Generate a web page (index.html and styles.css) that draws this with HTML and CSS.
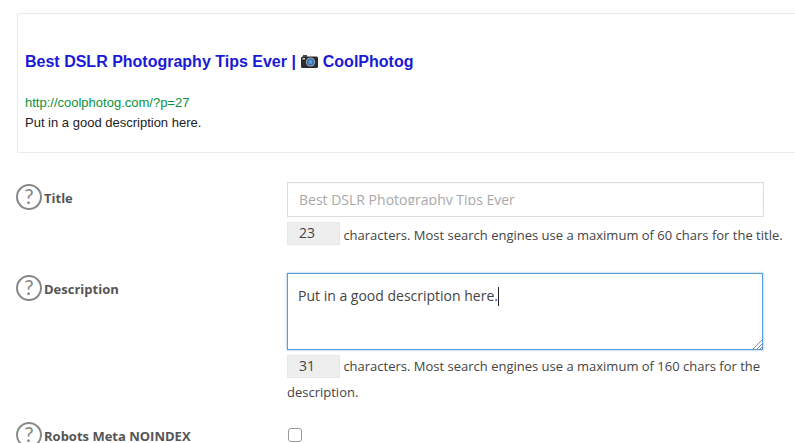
FILE: index.html
```html
<!DOCTYPE html>
<html lang="en">
<head>
<meta charset="utf-8">
<title>Snippet editor</title>
<link rel="stylesheet" href="styles.css">
</head>
<body>
<main class="page">
  <section class="preview">
    <h3 class="serp-title">Best DSLR Photography Tips Ever | <svg class="camera" viewBox="0 0 17 13" width="17" height="13" aria-hidden="true"><rect x="0" y="1.5" width="17" height="11.5" rx="1.5" fill="#2b2d30"/><rect x="2" y="0" width="4" height="2" fill="#44474b"/><rect x="1.5" y="3" width="2.5" height="1.5" fill="#c9ccd0"/><circle cx="9.5" cy="7" r="4.6" fill="#a4a8ae"/><circle cx="9.5" cy="7" r="3.5" fill="#2f6fb5"/><circle cx="9.5" cy="7" r="2" fill="#5b9fe0"/></svg> CoolPhotog</h3>
    <div class="serp-url">http://coolphotog.com/?p=27</div>
    <div class="serp-desc">Put in a good description here.</div>
  </section>
  <div class="row row-title">
    <div class="label"><span class="help">?</span><span class="label-text">Title</span></div>
    <div class="field">
      <div class="input placeholder"><span>Best DSLR Photography Tips Ever</span></div>
      <div class="hint"><span class="count">23</span> characters. Most search engines use a maximum of 60 chars for the title.</div>
    </div>
  </div>
  <div class="row row-desc">
    <div class="label"><span class="help">?</span><span class="label-text">Description</span></div>
    <div class="field">
      <div class="textarea"><span>Put in a good description here.</span><span class="caret"></span>
        <svg class="grip" viewBox="0 0 10 10" width="10" height="10" aria-hidden="true"><path d="M1 10 10 1M5 10 10 5M8 10 10 8" stroke="#8a8a8a" stroke-width="1" fill="none"/></svg>
      </div>
      <div class="hint"><span class="count">31</span> characters. Most search engines use a maximum of 160 chars for the description.</div>
    </div>
  </div>
  <div class="row row-robots">
    <div class="label"><span class="help">?</span><span class="label-text">Robots Meta NOINDEX</span></div>
    <div class="field"><span class="check"></span></div>
  </div>
</main>
</body>
</html>
```
FILE: styles.css
```css
html, body {
  margin: 0;
  height: 443px;
  overflow: hidden;
  background: #fff;
}
.page {
  padding: 13px 0 0 16px;
  font-family: "Open Sans", sans-serif;
  font-size: 13px;
  color: #444;
}
.preview {
  box-sizing: border-box;
  height: 140px;
  margin-left: 1px;
  margin-right: -10px;
  padding: 38px 7px 0;
  border: 1px solid #ebebeb;
  font-family: "Liberation Sans", Arial, sans-serif;
}
.serp-title {
  margin: 0;
  font-size: 16px;
  line-height: 20px;
  font-weight: 700;
  color: #1a1ad6;
}
.camera {
  vertical-align: -1px;
  margin: 0 0 0 1px;
}
.serp-url {
  margin-top: 21px;
  font-size: 13px;
  line-height: 20px;
  color: #0b9340;
}
.serp-desc {
  font-size: 13px;
  line-height: 20px;
  color: #222;
}
.row {
  display: grid;
  grid-template-columns: 271px 1fr;
}
.row-title { margin-top: 29px; }
.row-desc { margin-top: 25px; }
.row-robots { margin-top: 15px; }
.label {
  display: flex;
  align-items: flex-start;
  gap: 2px;
  font-weight: 700;
  font-size: 13px;
  color: #555;
}
.help {
  box-sizing: border-box;
  flex: none;
  width: 26px;
  height: 26px;
  margin-top: 2px;
  border: 2px solid #888;
  border-radius: 50%;
  font-family: "Lato", sans-serif;
  font-size: 21px;
  font-weight: 400;
  line-height: 19px;
  text-align: center;
  color: #888;
}
.label-text {
  margin-top: 7px;
  line-height: 18px;
}
.input {
  box-sizing: border-box;
  width: 477px;
  height: 35px;
  padding: 7px 11px 0;
  border: 1px solid #ddd;
  box-shadow: inset 0 1px 2px rgba(0, 0, 0, .04);
  overflow: hidden;
  font-size: 14px;
  line-height: 19px;
  color: #a9a9a9;
}
.input span {
  display: block;
  height: 15px;
  overflow: hidden;
}
.textarea {
  position: relative;
  box-sizing: border-box;
  width: 476px;
  height: 77px;
  padding: 12px 10px 0;
  border: 1px solid #5b9dd9;
  box-shadow: 0 0 2px rgba(91, 157, 217, .8);
  font-size: 14px;
  line-height: 19px;
  color: #444;
}
.caret {
  display: inline-block;
  width: 1px;
  height: 19px;
  background: #222;
  vertical-align: -5px;
}
.grip {
  position: absolute;
  right: 0;
  bottom: 0;
}
.hint {
  margin-top: 5px;
  font-size: 13px;
  line-height: 26px;
  color: #444;
}
.row-desc .hint { margin-top: 3px; }
.count {
  display: inline-block;
  box-sizing: border-box;
  width: 53px;
  height: 23px;
  padding-left: 11px;
  background: #eee;
  border: 1px solid #e8e8e8;
  font-size: 14px;
  line-height: 20px;
  vertical-align: top;
  color: #444;
}
.row-desc .count { margin-top: 2px; }
.check {
  display: block;
  box-sizing: border-box;
  width: 14px;
  height: 14px;
  margin-top: 8px;
  margin-left: 1px;
  border: 1px solid #999;
  border-radius: 3px;
  background: #fff;
}
```
